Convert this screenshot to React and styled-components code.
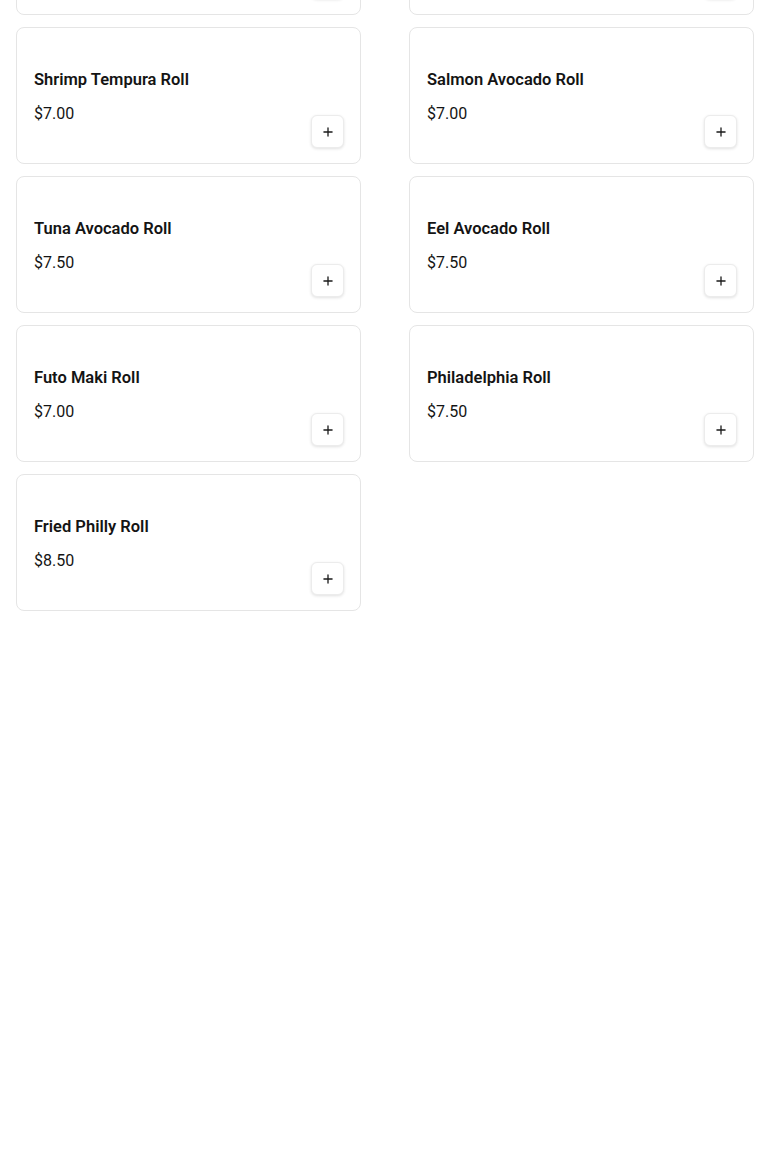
import styled, { createGlobalStyle } from "styled-components";
import { Plus } from "lucide-react";

const GlobalStyle = createGlobalStyle`
  html, body {
    margin: 0;
    padding: 0;
    background: #ffffff;
    font-family: Roboto, "Liberation Sans", sans-serif;
    color: #111111;
  }
`;

const Page = styled.div`
  display: flex;
  flex-direction: column;
  gap: 12px;
  padding: 0 16px 16px;
`;

const Grid = styled.div`
  display: grid;
  grid-template-columns: 345px 345px;
  column-gap: 48px;
  row-gap: 12px;
  align-items: end;
`;

/* the row above is scrolled away, only its bottom edge is left */
const Peek = styled(Grid)`
  grid-template-rows: 15px;
  overflow: hidden;
`;

const Card = styled.div`
  display: flex;
  align-items: flex-end;
  justify-content: space-between;
  padding: 16px;
  background: #fff;
  border: 1px solid #e5e5e5;
  border-radius: 8px;
`;

const Info = styled.div`
  display: flex;
  flex-direction: column;
  gap: 10px;
  padding: 24px 0 21px 1px;
`;

const Name = styled.div`
  font-size: 16.5px;
  line-height: 24px;
  font-weight: 600;
  color: #141414;
`;

const Price = styled.div`
  font-size: 16px;
  line-height: 24px;
  font-weight: 400;
  color: #141414;
`;

const AddButton = styled.button`
  display: inline-flex;
  width: 33px;
  height: 33px;
  margin-bottom: -1px;
  align-items: center;
  justify-content: center;
  padding: 0;
  background: #fff;
  border: 1px solid #ececec;
  border-radius: 6px;
  box-shadow: 0 1px 3px rgba(0, 0, 0, 0.12);
  color: #1a1a1a;
  cursor: pointer;
`;

const rolls = [
  { name: "Shrimp Tempura Roll", price: 7 },
  { name: "Salmon Avocado Roll", price: 7 },
  { name: "Tuna Avocado Roll", price: 7.5 },
  { name: "Eel Avocado Roll", price: 7.5 },
  { name: "Futo Maki Roll", price: 7 },
  { name: "Philadelphia Roll", price: 7.5 },
  { name: "Fried Philly Roll", price: 8.5 },
];

const hidden = [
  { name: "California Roll", price: 6 },
  { name: "Spicy Tuna Roll", price: 7 },
];

const RollCard = ({ item }) => (
  <Card>
    <Info>
      <Name>{item.name}</Name>
      <Price>${item.price.toFixed(2)}</Price>
    </Info>
    <AddButton type="button" aria-label={`Add ${item.name}`}>
      <Plus size={14} strokeWidth={2.25} />
    </AddButton>
  </Card>
);

export default function App() {
  return (
    <>
      <GlobalStyle />
      <Page>
        <Peek>
          {hidden.map((item) => (
            <RollCard key={item.name} item={item} />
          ))}
        </Peek>
        <Grid>
          {rolls.map((item) => (
            <RollCard key={item.name} item={item} />
          ))}
        </Grid>
      </Page>
    </>
  );
}
